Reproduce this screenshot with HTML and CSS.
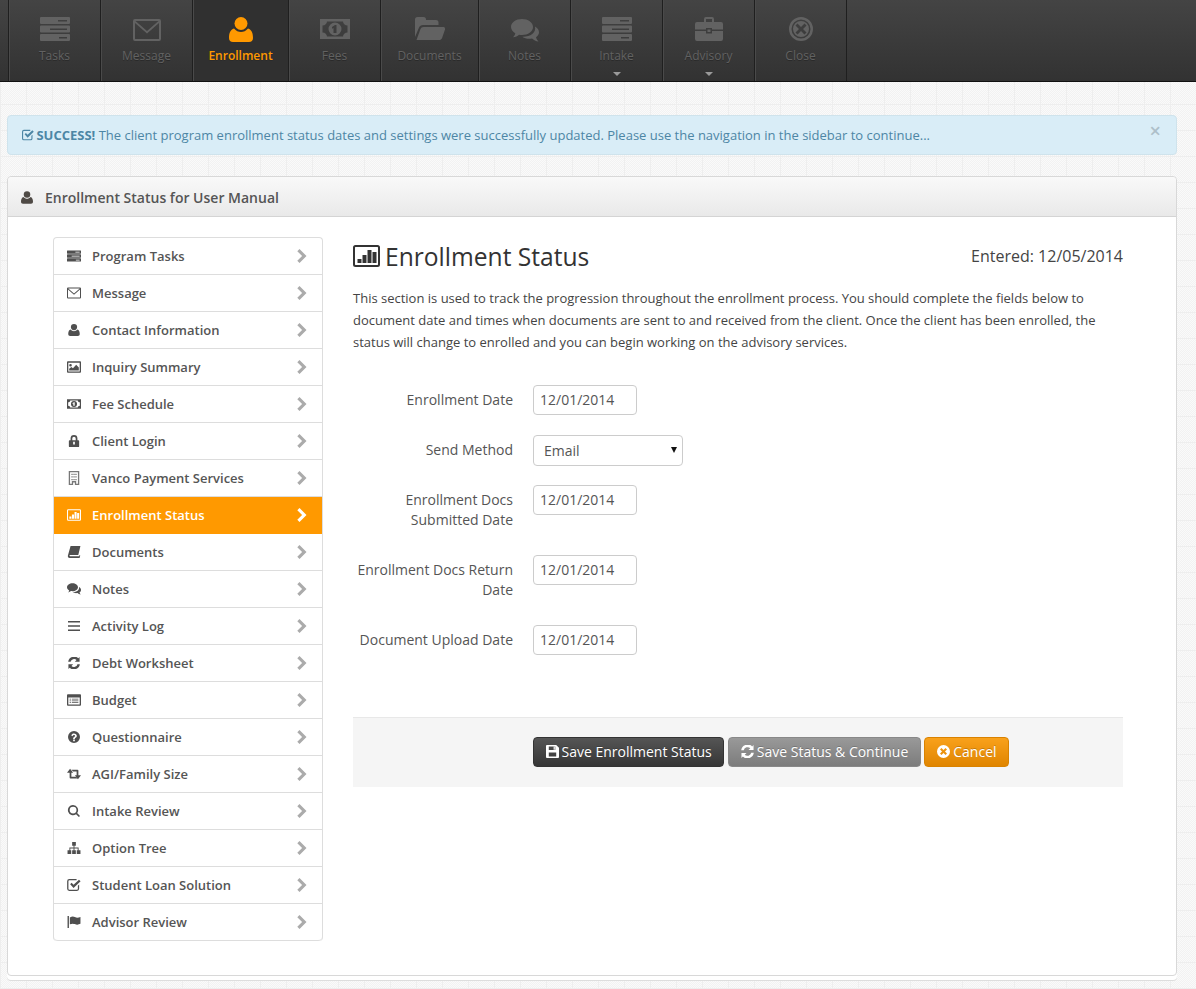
FILE: index.html
```html
<!DOCTYPE html>
<html lang="en">
<head>
<meta charset="utf-8">
<title>Enrollment Status</title>
<link rel="stylesheet" href="styles.css">
</head>
<body>
<svg class="defs" width="0" height="0" aria-hidden="true">
  <symbol id="i-server" viewBox="0 0 30 24"><path fill-rule="evenodd" d="M1 0h28a1 1 0 0 1 1 1v5a1 1 0 0 1-1 1H1a1 1 0 0 1-1-1V1a1 1 0 0 1 1-1zm17 3v1.500h9V3zM1 8.500h28a1 1 0 0 1 1 1v5a1 1 0 0 1-1 1H1a1 1 0 0 1-1-1v-5a1 1 0 0 1 1-1zm9 3v1.500h17v-1.500zM1 17h28a1 1 0 0 1 1 1v5a1 1 0 0 1-1 1H1a1 1 0 0 1-1-1v-5a1 1 0 0 1 1-1zm18 3v1.500h8V20z"/></symbol>
  <symbol id="i-mail" viewBox="0 0 28 22"><path fill-rule="evenodd" d="M2 0h24a2 2 0 0 1 2 2v18a2 2 0 0 1-2 2H2a2 2 0 0 1-2-2V2a2 2 0 0 1 2-2zm.500 2L14 12 25.500 2zM2 4v15.500a.500.500 0 0 0 .500.500h23a.500.500 0 0 0 .500-.500V4L14 14.500z"/></symbol>
  <symbol id="i-user" viewBox="0 0 24 25"><circle cx="12" cy="6.500" r="6.500"/><path d="M5 11.500c2 2.500 4.500 3.500 7 3.500s5-1 7-3.500c3.500 1 5 4.500 5 9.500 0 2.500-1.500 4-4 4H4c-2.500 0-4-1.500-4-4 0-5 1.500-8.500 5-9.500z"/></symbol>
  <symbol id="i-money" viewBox="0 0 30 20"><path fill-rule="evenodd" d="M0 0h30v20H0zM7 2.500C7 4.500 5 6.500 2.500 6.500v7c2.500 0 4.500 2 4.500 4h16c0-2 2-4 4.500-4v-7C25 6.500 23 4.500 23 2.500zM15 3.500a6.500 6.500 0 1 1 0 13 6.500 6.500 0 0 1 0-13zM15 6l-3 2v1.800l1.500-.8V14h3V6z"/></symbol>
  <symbol id="i-folder" viewBox="0 0 30 23"><path d="M0 20V2.500A2.500 2.500 0 0 1 2.500 0h6A2.500 2.500 0 0 1 11 2.500V3h10a2.500 2.500 0 0 1 2.500 2.500V8H8C6 8 4.800 9 4 10.500z"/><path d="M1.500 23H24c1.500 0 2.300-.7 3-1.800l3-8.700c.4-1.300-.3-2.500-2-2.500H8.500c-1.500 0-2.500.7-3 2z"/></symbol>
  <symbol id="i-chat" viewBox="0 0 28 23"><path d="M11 0c6 0 11 3.400 11 8s-5 8-11 8c-1 0-2-.1-3-.3C6.500 17 4.500 18 2 18.300c1-1 2-2.300 2.300-4C1.700 12.800 0 10.500 0 8c0-4.600 5-8 11-8z"/><path d="M24 7.500c2.500 1.400 4 3.400 4 5.800 0 2-1.200 3.800-3 5 .3 1.500 1.300 3 2.500 4.200-2.500-.3-5-1.400-6.500-3-1 .2-1.800.3-2.800.3-2.500 0-5-.8-6.800-2.100 7.500.3 14-3.700 12.600-10.200z"/></symbol>
  <symbol id="i-case" viewBox="0 0 28 24"><path fill-rule="evenodd" d="M9 5V2a2 2 0 0 1 2-2h6a2 2 0 0 1 2 2v3h7a2 2 0 0 1 2 2v5.500H17V11h-6v1.500H0V7a2 2 0 0 1 2-2zm2-3v3h6V2zM0 14h11v2.500h6V14h11v8a2 2 0 0 1-2 2H2a2 2 0 0 1-2-2zM12.500 12.500h3V15h-3z"/></symbol>
  <symbol id="i-xcircle" viewBox="0 0 24 24"><path fill-rule="evenodd" d="M12 0a12 12 0 1 1 0 24 12 12 0 0 1 0-24zm0 2.500a9.500 9.500 0 1 0 0 19 9.500 9.500 0 0 0 0-19zM12 4a8 8 0 1 1 0 16 8 8 0 0 1 0-16zM8.500 6.500L6.500 8.500 10 12l-3.500 3.500 2 2L12 14l3.500 3.500 2-2L14 12l3.500-3.500-2-2L12 10z"/></symbol>
  <symbol id="i-xsolid" viewBox="0 0 16 16"><path fill-rule="evenodd" d="M8 0a8 8 0 1 1 0 16A8 8 0 0 1 8 0zM5.500 3.700L3.700 5.500 6.200 8l-2.500 2.500 1.800 1.800L8 9.800l2.500 2.500 1.800-1.800L9.800 8l2.500-2.500-1.800-1.800L8 6.200z"/></symbol>
  <symbol id="i-check" viewBox="0 0 16 14"><path d="M2.500 0H11v1.500H2.500a1 1 0 0 0-1 1v9a1 1 0 0 0 1 1h9a1 1 0 0 0 1-1V8L14 6.500v5a2.500 2.500 0 0 1-2.500 2.500h-9A2.500 2.500 0 0 1 0 11.500v-9A2.500 2.500 0 0 1 2.500 0z"/><path d="M3.500 6L5.200 4.300 7.500 6.600 13.800.8 15.700 2.600 7.500 10.500z"/></symbol>
  <symbol id="i-chart" viewBox="0 0 27 22"><path fill-rule="evenodd" d="M2.500 0h22A2.500 2.500 0 0 1 27 2.500v17a2.500 2.500 0 0 1-2.500 2.500h-22A2.500 2.500 0 0 1 0 19.500v-17A2.500 2.500 0 0 1 2.500 0zm0 2a.5.500 0 0 0-.5.500v17c0 .3.200.5.500.5h22c.3 0 .5-.2.500-.5v-17a.5.500 0 0 0-.5-.5zM4.500 14h4v4h-4zM9.500 10h4v8h-4zM14.500 5h4v13h-4zM19.500 7h4v11h-4z"/></symbol>
  <symbol id="i-picture" viewBox="0 0 16 13"><path fill-rule="evenodd" d="M1 0h14a1 1 0 0 1 1 1v11a1 1 0 0 1-1 1H1a1 1 0 0 1-1-1V1a1 1 0 0 1 1-1zm.500 1.500v10h13v-10zM4 3a1.500 1.500 0 1 1 0 3 1.500 1.500 0 0 1 0-3zM2.500 10.500V8.500l2.500-2 1.800 1.500L10.500 4l3 3v3.500z"/></symbol>
  <symbol id="i-lock" viewBox="0 0 12 14"><path fill-rule="evenodd" d="M2 6V4a4 4 0 0 1 8 0v2h1a1 1 0 0 1 1 1v6a1 1 0 0 1-1 1H1a1 1 0 0 1-1-1V7a1 1 0 0 1 1-1zm2 0h4V4a2 2 0 0 0-4 0zm1 2v3h2V8z"/></symbol>
  <symbol id="i-building" viewBox="0 0 12 16"><path fill-rule="evenodd" d="M0 0h12v16H7v-3H5v3H0zM1.500 1.500v13H3.500v-3h5v3h2v-13zM3 3h1.500v1.500H3zM5.300 3h1.500v1.500H5.300zM7.500 3H9v1.500H7.500zM3 6h1.500v1.500H3zM5.300 6h1.500v1.500H5.300zM7.500 6H9v1.500H7.500zM3 9h1.500v1.500H3zM5.300 9h1.500v1.500H5.300zM7.500 9H9v1.500H7.500z"/></symbol>
  <symbol id="i-book" viewBox="0 0 15 14"><path d="M3.500 0H15l-2.500 10.500H3C2 10.500 1.800 12 3 12h10.500l.5-1.500.8.500-.8 3H2.500C.8 14 0 12.500.4 11z"/></symbol>
  <symbol id="i-list" viewBox="0 0 14 12"><path d="M1 1h12v1.600H1zM1 5.200h12v1.600H1zM1 9.400h12V11H1z"/></symbol>
  <symbol id="i-refresh" viewBox="0 0 14 14"><path d="M13.500 0v5.500H8l2-2A4.200 4.200 0 0 0 3 5.600H.2A7 7 0 0 1 12 1.500zM.5 14V8.500H6l-2 2a4.200 4.200 0 0 0 7-2.100h2.800A7 7 0 0 1 2 12.500z"/></symbol>
  <symbol id="i-budget" viewBox="0 0 16 13"><path fill-rule="evenodd" d="M1 0h14a1 1 0 0 1 1 1v11a1 1 0 0 1-1 1H1a1 1 0 0 1-1-1V1a1 1 0 0 1 1-1zm.500 3.500v8h13v-8zM3 5h1.500v1H3zM5.500 5H13v1H5.500zM3 7h1.500v1H3zM5.500 7H13v1H5.500zM3 9h1.500v1H3zM5.500 9H13v1H5.500z"/></symbol>
  <symbol id="i-question" viewBox="0 0 14 14"><path fill-rule="evenodd" d="M7 0a7 7 0 1 1 0 14A7 7 0 0 1 7 0zM6 10v2h2v-2zM3.800 5.200l1.500.8c.3-.8.800-1.200 1.600-1.200.8 0 1.300.4 1.300 1 0 .5-.4.800-1 1.200-.8.500-1.200 1-1.200 2.300h2c0-.7.200-1 .8-1.400.9-.6 1.500-1.200 1.500-2.200 0-1.700-1.500-2.800-3.400-2.800-1.500 0-2.400.6-3 2.300z"/></symbol>
  <symbol id="i-retweet" viewBox="0 0 16 12"><path d="M3.500 0L7 4.500H5V9h5l2 2H4a1 1 0 0 1-1-1V4.500H0zM5 1h7a1 1 0 0 1 1 1v5.500h3L12.500 12 9 7.500h2V3H7z"/></symbol>
  <symbol id="i-search" viewBox="0 0 13 13"><path fill-rule="evenodd" d="M5.500 0a5.500 5.500 0 0 1 4.400 8.700L13 11.800 11.800 13 8.700 9.900A5.500 5.500 0 1 1 5.500 0zm0 1.800a3.700 3.700 0 1 0 0 7.400 3.700 3.700 0 0 0 0-7.400z"/></symbol>
  <symbol id="i-tree" viewBox="0 0 14 13"><path d="M5 0h4v4H7.500v2H12v3h2v4h-4V9h1V7H7.500v2H9v4H5V9h1.500V7H3v2h1v4H0V9h2V6h4.500V4H5z"/></symbol>
  <symbol id="i-flag" viewBox="0 0 14 13"><path d="M0 0h1.500v13H0zM2.500 1.500C5 .3 6.500.5 8 1.200s3.500 1 6-.2v7.500c-2.500 1.200-4.500 1-6 .3S5 8 2.500 9z"/></symbol>
  <symbol id="i-save" viewBox="0 0 14 14"><path fill-rule="evenodd" d="M1 0h10l3 3v10a1 1 0 0 1-1 1H1a1 1 0 0 1-1-1V1a1 1 0 0 1 1-1zm2 1.500v4h7v-4zm5.200.5h1.300v3H8.200zM3 8v4.500h8V8z"/></symbol>
  <symbol id="i-chev" viewBox="0 0 10 14"><path d="M2.500 0L9.500 7l-7 7L.3 11.800 5.100 7 .3 2.200z"/></symbol>
</svg>

<nav class="topbar">
  <a class="tab"><svg class="tab-icon server"><use href="#i-server"/></svg><span>Tasks</span></a>
  <a class="tab"><svg class="tab-icon mail"><use href="#i-mail"/></svg><span>Message</span></a>
  <a class="tab active"><svg class="tab-icon user"><use href="#i-user"/></svg><span>Enrollment</span></a>
  <a class="tab"><svg class="tab-icon money"><use href="#i-money"/></svg><span>Fees</span></a>
  <a class="tab wide"><svg class="tab-icon folder"><use href="#i-folder"/></svg><span>Documents</span></a>
  <a class="tab"><svg class="tab-icon chat"><use href="#i-chat"/></svg><span>Notes</span></a>
  <a class="tab drop"><svg class="tab-icon server"><use href="#i-server"/></svg><span>Intake</span></a>
  <a class="tab drop"><svg class="tab-icon case"><use href="#i-case"/></svg><span>Advisory</span></a>
  <a class="tab"><svg class="tab-icon xcircle"><use href="#i-xcircle"/></svg><span>Close</span></a>
</nav>

<main class="page">
  <div class="alert">
    <p><svg class="alert-icon"><use href="#i-check"/></svg> <strong>SUCCESS!</strong> The client program enrollment status dates and settings were successfully updated. Please use the navigation in the sidebar to continue...</p>
    <span class="alert-close">×</span>
  </div>

  <section class="panel">
    <header class="panel-head">
      <svg class="head-icon"><use href="#i-user"/></svg>
      <h2>Enrollment Status for User Manual</h2>
    </header>
    <div class="panel-body">
      <ul class="side">
        <li><svg class="si"><use href="#i-server"/></svg><span>Program Tasks</span><svg class="chev"><use href="#i-chev"/></svg></li>
        <li><svg class="si"><use href="#i-mail"/></svg><span>Message</span><svg class="chev"><use href="#i-chev"/></svg></li>
        <li><svg class="si"><use href="#i-user"/></svg><span>Contact Information</span><svg class="chev"><use href="#i-chev"/></svg></li>
        <li><svg class="si"><use href="#i-picture"/></svg><span>Inquiry Summary</span><svg class="chev"><use href="#i-chev"/></svg></li>
        <li><svg class="si"><use href="#i-money"/></svg><span>Fee Schedule</span><svg class="chev"><use href="#i-chev"/></svg></li>
        <li><svg class="si"><use href="#i-lock"/></svg><span>Client Login</span><svg class="chev"><use href="#i-chev"/></svg></li>
        <li><svg class="si tall"><use href="#i-building"/></svg><span>Vanco Payment Services</span><svg class="chev"><use href="#i-chev"/></svg></li>
        <li class="on"><svg class="si"><use href="#i-chart"/></svg><span>Enrollment Status</span><svg class="chev"><use href="#i-chev"/></svg></li>
        <li><svg class="si"><use href="#i-book"/></svg><span>Documents</span><svg class="chev"><use href="#i-chev"/></svg></li>
        <li><svg class="si"><use href="#i-chat"/></svg><span>Notes</span><svg class="chev"><use href="#i-chev"/></svg></li>
        <li><svg class="si"><use href="#i-list"/></svg><span>Activity Log</span><svg class="chev"><use href="#i-chev"/></svg></li>
        <li><svg class="si"><use href="#i-refresh"/></svg><span>Debt Worksheet</span><svg class="chev"><use href="#i-chev"/></svg></li>
        <li><svg class="si"><use href="#i-budget"/></svg><span>Budget</span><svg class="chev"><use href="#i-chev"/></svg></li>
        <li><svg class="si"><use href="#i-question"/></svg><span>Questionnaire</span><svg class="chev"><use href="#i-chev"/></svg></li>
        <li><svg class="si"><use href="#i-retweet"/></svg><span>AGI/Family Size</span><svg class="chev"><use href="#i-chev"/></svg></li>
        <li><svg class="si"><use href="#i-search"/></svg><span>Intake Review</span><svg class="chev"><use href="#i-chev"/></svg></li>
        <li><svg class="si"><use href="#i-tree"/></svg><span>Option Tree</span><svg class="chev"><use href="#i-chev"/></svg></li>
        <li><svg class="si"><use href="#i-check"/></svg><span>Student Loan Solution</span><svg class="chev"><use href="#i-chev"/></svg></li>
        <li><svg class="si"><use href="#i-flag"/></svg><span>Advisor Review</span><svg class="chev"><use href="#i-chev"/></svg></li>
      </ul>

      <div class="content">
        <div class="title-row">
          <h1><svg class="title-icon"><use href="#i-chart"/></svg>Enrollment Status</h1>
          <div class="entered">Entered: 12/05/2014</div>
        </div>
        <p class="intro">This section is used to track the progression throughout the enrollment process. You should complete the fields below to document date and times when documents are sent to and received from the client. Once the client has been enrolled, the status will change to enrolled and you can begin working on the advisory services.</p>

        <form class="form">
          <div class="row"><label>Enrollment Date</label><input type="text" value="12/01/2014"></div>
          <div class="row"><label>Send Method</label><div class="select-wrap"><select><option>Email</option></select></div></div>
          <div class="row tall"><label>Enrollment Docs Submitted Date</label><input type="text" value="12/01/2014"></div>
          <div class="row tall"><label>Enrollment Docs Return Date</label><input type="text" value="12/01/2014"></div>
          <div class="row"><label>Document Upload Date</label><input type="text" value="12/01/2014"></div>
          <div class="actions">
            <button type="button" class="btn dark"><svg class="bi"><use href="#i-save"/></svg>Save Enrollment Status</button>
            <button type="button" class="btn gray"><svg class="bi"><use href="#i-refresh"/></svg>Save Status &amp; Continue</button>
            <button type="button" class="btn orange"><svg class="bi"><use href="#i-xsolid"/></svg>Cancel</button>
          </div>
        </form>
      </div>
    </div>
  </section>
</main>
</body>
</html>
```

FILE: styles.css
```css
* { box-sizing: border-box; }

html, body { margin: 0; padding: 0; }

body {
  font-family: "Open Sans", "Liberation Sans", sans-serif;
  font-size: 14px;
  color: #555;
  height: 989px;
  overflow: hidden;
  background-color: #f6f6f6;
  background-image:
    linear-gradient(#eeeeee 1px, transparent 1px),
    linear-gradient(90deg, #eeeeee 1px, transparent 1px),
    repeating-conic-gradient(#f2f2f2 0 25%, #fafafa 0 50%);
  background-size: 80px 26px, 26px 80px, 2px 2px;
}

.defs { position: absolute; }

/* top bar */
.topbar {
  display: flex;
  height: 82px;
  padding-left: 8px;
  background: linear-gradient(#444444, #323232);
  border-bottom: 1px solid #111;
}

.tab {
  display: flex;
  flex-direction: column;
  align-items: center;
  position: relative;
  min-width: 92px;
  padding: 0 15px;
  border-left: 1px solid #1f1f1f;
  box-shadow: inset 1px 0 0 #4a4a4a;
  color: #626262;
  font-size: 12px;
  line-height: 16px;
  text-shadow: 0 1px 0 #2a2a2a;
}

.tab:last-child { border-right: 1px solid #1f1f1f; min-width: 93px; }

.tab span { position: absolute; top: 48px; white-space: nowrap; }

.tab.wide { min-width: 98px; }

.tab.active { background: #303030; color: #ff9900; font-weight: 600; min-width: 96px; }

.tab-icon { fill: currentColor; margin-top: 17px; }
.tab-icon.server { width: 30px; height: 24px; margin-top: 17px; }
.tab-icon.mail { width: 28px; height: 22px; margin-top: 19px; }
.tab-icon.user { width: 24px; height: 25px; }
.tab-icon.money { width: 30px; height: 20px; margin-top: 19px; }
.tab-icon.folder { width: 30px; height: 23px; }
.tab-icon.chat { width: 28px; height: 23px; margin-top: 19px; }
.tab-icon.case { width: 28px; height: 24px; }
.tab-icon.xcircle { width: 24px; height: 24px; }

.tab.drop::after {
  content: "";
  position: absolute;
  left: 50%;
  top: 72px;
  margin-left: -4px;
  border: 4px solid transparent;
  border-top-color: #9a9a9a;
  border-bottom: 0;
}

/* page */
.page { padding: 33px 19px 0 7px; }

.alert {
  position: relative;
  height: 40px;
  margin-bottom: 21px;
  padding: 0 14px;
  display: flex;
  align-items: center;
  border: 1px solid #cfe3ec;
  border-radius: 4px;
  background: #d9edf7;
  color: #4d86a5;
  font-size: 13px;
}

.alert p { margin: 0; }
.alert strong { font-weight: 700; }
.alert-icon { width: 12px; height: 12px; margin-right: -1px; fill: currentColor; vertical-align: -1px; }

.alert-close {
  position: absolute;
  right: 15px;
  top: 5px;
  font-size: 20px;
  line-height: 20px;
  color: #aebfc9;
  font-weight: 600;
}

.panel {
  height: 800px;
  border: 1px solid #d8d8d8;
  border-radius: 4px;
  background: #fff;
  box-shadow: 0 4px 0 #fff, 0 5px 0 #ddd;
}

.panel-head {
  display: flex;
  align-items: center;
  height: 40px;
  padding: 2px 0 0 13px;
  border-bottom: 1px solid #d4d4d4;
  border-radius: 4px 4px 0 0;
  background: linear-gradient(#f9f9f9, #e9e9e9);
}

.panel-head h2 { margin: 0; font-size: 14px; font-weight: 600; color: #555; }
.head-icon { width: 12px; height: 13px; margin-right: 12px; fill: #4f4a45; }

.panel-body { display: flex; padding: 20px 53px 0 45px; }

/* sidebar */
.side {
  width: 270px;
  flex: none;
  margin: 0 30px 0 0;
  padding: 0;
  list-style: none;
  border: 1px solid #ddd;
  border-bottom: 0;
  border-radius: 4px;
  background: #fff;
}

.side li {
  display: flex;
  align-items: center;
  height: 37px;
  padding: 0 15px 0 13px;
  border-bottom: 1px solid #ddd;
  font-size: 13px;
  font-weight: 600;
  color: #555;
}

.side li:last-child { border-radius: 0 0 4px 4px; }
.side li span { flex: 1; }

.si { width: 14px; height: 12px; margin-right: 11px; fill: #4f4f4f; flex: none; }
.si.tall { height: 14px; fill: #777; }
.chev { width: 10px; height: 14px; fill: #ababab; flex: none; }

.side li.on { background: #ff9900; color: #fff; border-bottom-color: #ff9900; }
.side li.on .si, .side li.on .chev { fill: #fff; }

/* content */
.content { flex: 1; min-width: 0; }

.title-row {
  display: flex;
  justify-content: space-between;
  align-items: center;
  height: 38px;
}

.title-row h1 {
  margin: 0;
  font-size: 24.600px;
  font-weight: 400;
  color: #333;
  display: flex;
  align-items: center;
}

.title-icon { width: 27px; height: 22px; margin-right: 5px; fill: #333; }
.entered { font-size: 16px; color: #444; }

.intro { margin: 12px 0 0; font-size: 13px; line-height: 22px; color: #444; }

.form { margin-top: 32px; }

.row { display: flex; align-items: flex-start; height: 50px; }
.row.tall { height: 70px; }

.row label {
  width: 160px;
  margin-right: 20px;
  padding-top: 5px;
  text-align: right;
  line-height: 20px;
  color: #555;
}

.row input {
  width: 104px;
  height: 30px;
  padding: 0 6px 2px;
  font: inherit;
  color: #555;
  border: 1px solid #ccc;
  border-radius: 4px;
  background: #fff;
}

.select-wrap { position: relative; width: 150px; }

.select-wrap::after {
  content: "";
  position: absolute;
  right: 6px;
  top: 12px;
  border: 3.500px solid transparent;
  border-top: 6px solid #111;
  border-bottom: 0;
}

.select-wrap select {
  display: block;
  width: 100%;
  height: 31px;
  padding: 0 10px;
  font: inherit;
  color: #555;
  appearance: none;
  -webkit-appearance: none;
  border: 1px solid #ccc;
  border-radius: 4px;
  background: #fff;
}

.actions {
  display: flex;
  margin-top: 42px;
  height: 70px;
  padding: 19px 0 0 180px;
  border-top: 1px solid #e8e8e8;
  background: #f5f5f5;
}

.btn {
  display: flex;
  align-items: center;
  height: 30px;
  padding: 0 11.500px 2px;
  margin-right: 4px;
  font: inherit;
  color: #fff;
  border-radius: 4px;
  border: 1px solid transparent;
  text-shadow: 0 -1px 0 rgba(0,0,0,.2);
}

.btn.orange { margin-right: 0; margin-left: -1px; padding-left: 12.500px; }

.bi { width: 13px; height: 13px; margin-right: 3px; fill: currentColor; }

.btn.dark { background: linear-gradient(#555, #363636); border-color: #333; }
.btn.gray { background: linear-gradient(#999, #7c7c7c); border-color: #888; }
.btn.orange { background: linear-gradient(#f9a11b, #e08500); border-color: #d98200; }
```
